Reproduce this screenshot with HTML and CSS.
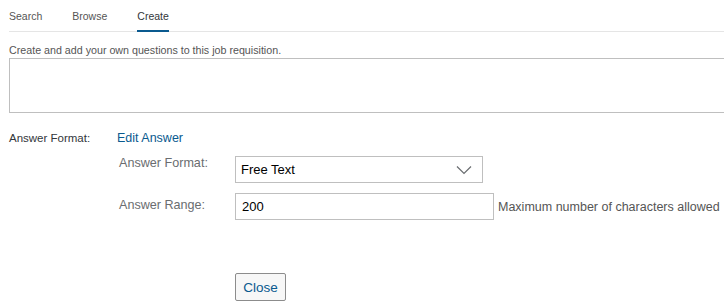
FILE: index.html
```html
<!DOCTYPE html>
<html lang="en">
<head>
  <meta charset="UTF-8" />
  <title>Create Question</title>
  <link rel="stylesheet" href="styles.css">
</head>
<body>

  <nav class="tabs">
    <a class="tab">Search</a>
    <a class="tab">Browse</a>
    <a class="tab active">Create</a>
  </nav>

  <p class="hint">Create and add your own questions to this job requisition.</p>
  <textarea class="question"></textarea>

  <div class="answer-row">
    <span class="answer-label">Answer Format:</span>
    <a class="edit-link">Edit Answer</a>
  </div>

  <div class="answer-form">
    <label class="field-label">Answer Format:</label>
    <div class="select">
      <span>Free Text</span>
      <svg width="16" height="10" viewBox="0 0 16 10">
        <path d="M1 1.5 L8 8.5 L15 1.5" fill="none" stroke="#6a6d70" stroke-width="1.2"/>
      </svg>
    </div>

    <label class="field-label range-label">Answer Range:</label>
    <div class="range">
      <input class="range-input" type="text" value="200">
      <span class="range-note">Maximum number of characters allowed</span>
    </div>
  </div>

  <div class="actions">
    <button class="close-btn">Close</button>
  </div>

</body>
</html>
```

FILE: styles.css
```css
html, body {
    margin: 0;
    overflow: hidden;
    background: #fff;
    font-family: "Liberation Sans", Arial, sans-serif;
}

body {
    padding-left: 9px;
    width: 740px;
}

.tabs {
    display: flex;
    height: 31px;
    border-bottom: 1px solid #e5e5e5;
}
.tab {
    font-size: 10.5px;
    color: #555;
    padding-top: 10px;
    margin-right: 30px;
    box-sizing: border-box;
}
.tab.active {
    color: #32363a;
    border-bottom: 2px solid #0a5a8f;
    margin-bottom: -1px;
}

.hint {
    margin: 12px 0 0;
    font-size: 10.7px;
    color: #555;
    line-height: 13px;
}

.question {
    display: block;
    width: 730px;
    height: 55px;
    margin: 1px 0 0;
    border: 1px solid #bfbfbf;
    box-sizing: border-box;
    resize: none;
}

.answer-row {
    display: flex;
    margin-top: 18px;
    align-items: baseline;
}
.answer-label {
    width: 108px;
    font-size: 11.5px;
    color: #32363a;
}
.edit-link {
    font-size: 12.5px;
    color: #0a5a8f;
}

.answer-form {
    display: grid;
    grid-template-columns: 116px auto;
    row-gap: 10px;
    margin-top: 11px;
    padding-left: 110px;
}
.field-label {
    font-size: 12.6px;
    color: #6a6d70;
    padding-top: 0;
}
.range-label {
    padding-top: 5px;
}

.select {
    display: flex;
    align-items: center;
    justify-content: space-between;
    width: 248px;
    height: 27px;
    box-sizing: border-box;
    border: 1px solid #bfbfbf;
    padding: 0 10px 0 5px;
    font-size: 13px;
    color: #000;
}

.range {
    display: flex;
    align-items: center;
}
.range-input {
    width: 259px;
    height: 27px;
    box-sizing: border-box;
    border: 1px solid #bfbfbf;
    padding: 0 6px;
    font-family: inherit;
    font-size: 13px;
    color: #000;
    margin: 0;
}
.range-note {
    margin-left: 4px;
    font-size: 12.5px;
    color: #555;
}

.actions {
    margin-top: 53px;
    padding-left: 226px;
}
.close-btn {
    width: 51px;
    height: 28px;
    border: 1px solid #8c8c8c;
    border-radius: 2px;
    background: #f7f7f7;
    color: #0a5a8f;
    font-family: inherit;
    font-size: 13.5px;
    padding: 0;
}
```
